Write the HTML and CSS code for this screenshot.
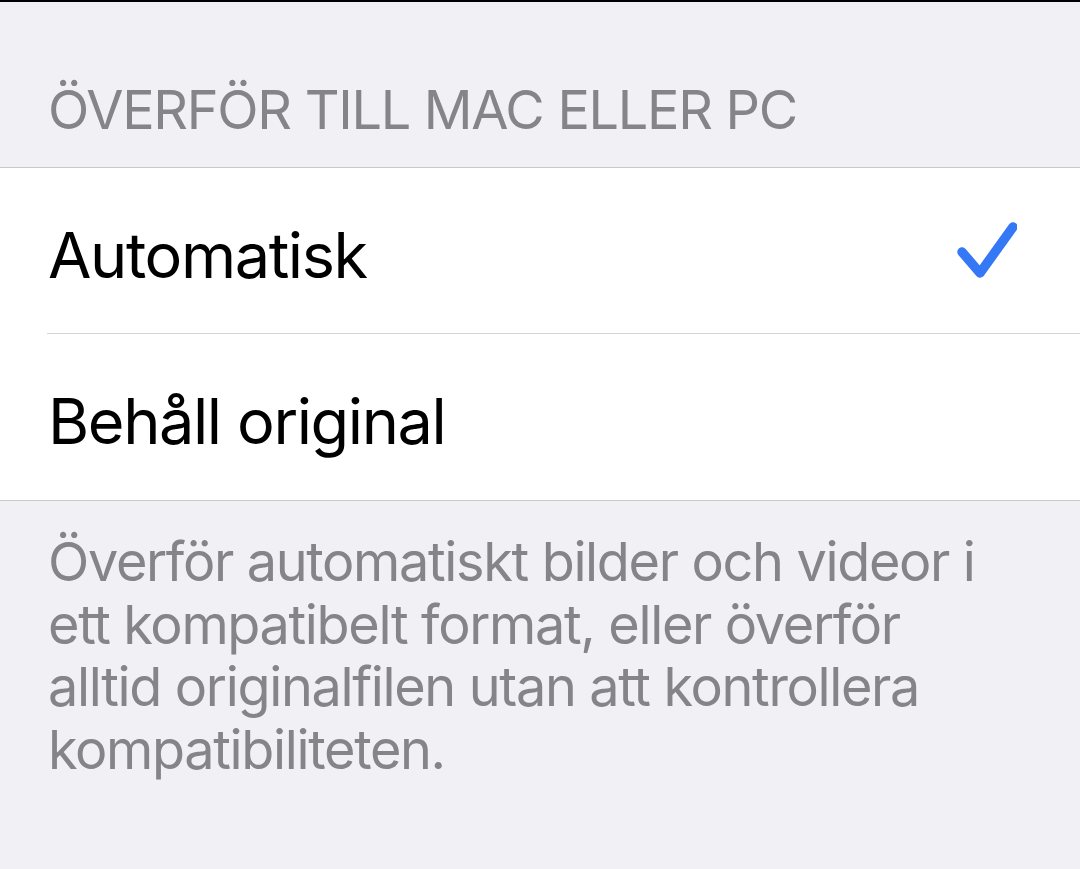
FILE: index.html
```html
<!DOCTYPE html>
<html lang="sv">
<head>
<meta charset="utf-8">
<title>Överför till Mac eller PC</title>
<link rel="stylesheet" href="styles.css">
</head>
<body>
<div class="topbar"></div>
<div class="section-header">ÖVERFÖR TILL MAC ELLER PC</div>
<div class="group">
  <div class="row">
    <span class="label">Automatisk</span>
    <svg class="check" width="60" height="60" viewBox="0 0 60 60" aria-hidden="true">
      <path d="M5 31 L23 52 L56 6" fill="none" stroke="#3478f6" stroke-width="9.5" stroke-linecap="round" stroke-linejoin="round"/>
    </svg>
  </div>
  <div class="row">
    <span class="label">Behåll original</span>
  </div>
</div>
<div class="footer">Överför automatiskt bilder och videor i ett kompatibelt format, eller överför alltid originalfilen utan att kontrollera kompatibiliteten.</div>
</body>
</html>
```
FILE: styles.css
```css
html, body {
  margin: 0;
  padding: 0;
}
body {
  background: #f1f0f5;
  font-family: Inter, "Noto Sans", "Liberation Sans", sans-serif;
  width: 1080px;
  height: 869px;
  overflow: hidden;
}
.topbar {
  height: 2px;
  background: #000;
}
.section-header {
  box-sizing: border-box;
  height: 166px;
  padding: 81px 0 0 48px;
  font-size: 54px;
  line-height: 54px;
  letter-spacing: -1.3px;
  color: #858489;
  border-bottom: 1px solid #c9c8cd;
}
.group {
  background: #fff;
  border-bottom: 1px solid #c9c8cd;
}
.row {
  box-sizing: border-box;
  height: 166px;
  margin-left: 47px;
  padding: 0 63px 0 1px;
  display: flex;
  align-items: center;
  justify-content: space-between;
  border-bottom: 1px solid #d4d3d8;
}
.row:last-child {
  border-bottom: none;
  height: 166px;
}
.label {
  font-size: 63px;
  line-height: 63px;
  letter-spacing: -1.4px;
  color: #000;
  padding-top: 9px;
}
.check {
  display: block;
}
.footer {
  padding: 30px 90px 0 48px;
  font-size: 54px;
  line-height: 62.5px;
  letter-spacing: -1.35px;
  color: #858489;
}
```
